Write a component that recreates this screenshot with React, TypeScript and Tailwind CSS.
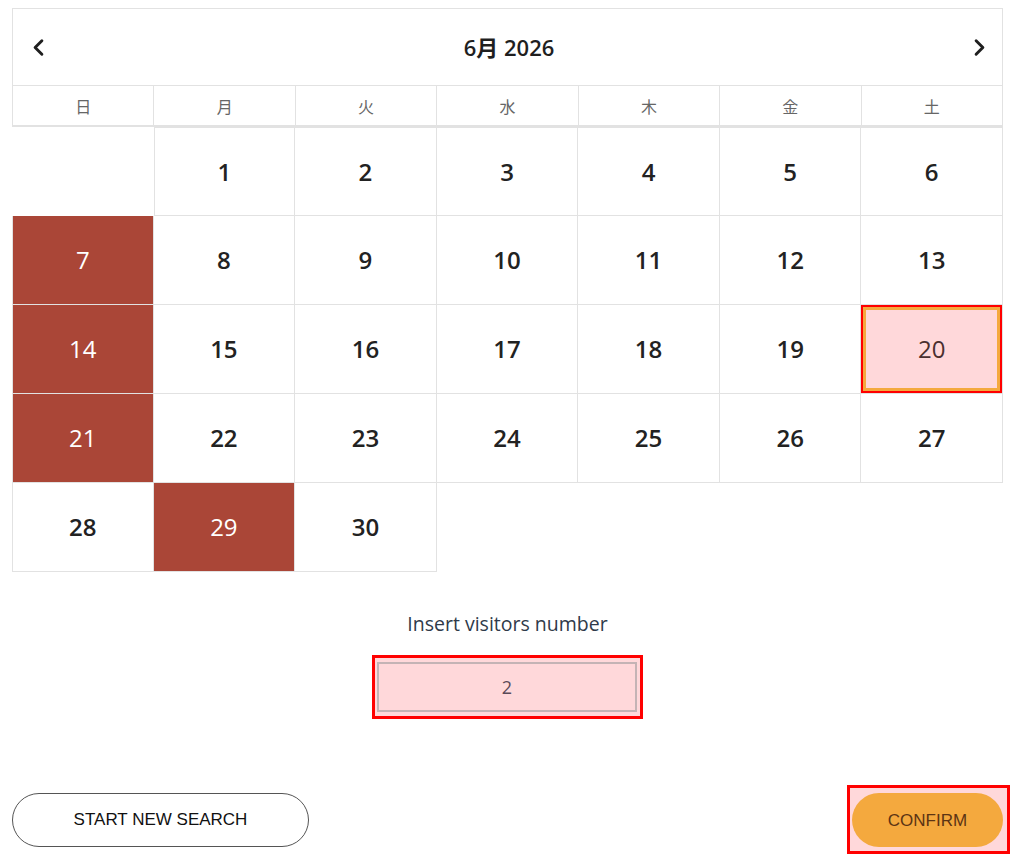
import { ChevronLeft, ChevronRight } from 'lucide-react';

const weekdays = ['日', '月', '火', '水', '木', '金', '土'];

// 0 = empty slot before the 1st
const days: number[] = [0, ...Array.from({ length: 30 }, (_, i) => i + 1)];

const closed = [7, 14, 21, 29];
const selected = 20;

const App = () => {
  return (
    <div
      className="min-h-[855px] bg-white pt-2 pl-3"
      style={{ fontFamily: '"Open Sans", "Noto Sans CJK JP", sans-serif' }}
    >
      <div className="w-[991px]">
        {/* Month header */}
        <div className="flex h-[78px] items-center justify-between border border-[#e2e2e2] pl-[12px] pr-[9px] text-[#1f1f1f]">
          <ChevronLeft size={27} strokeWidth={2.6} />
          <span className="text-[22px] font-semibold">6月 2026</span>
          <ChevronRight size={27} strokeWidth={2.6} />
        </div>

        {/* Weekday row */}
        <div className="grid h-[41px] grid-cols-7 border-b-2 border-l border-[#e2e2e2]">
          {weekdays.map((d) => (
            <div
              key={d}
              className="flex items-center justify-center border-r border-[#e2e2e2] text-[16px] text-[#666666]"
              style={{ fontFamily: '"Noto Sans CJK JP", sans-serif' }}
            >
              {d}
            </div>
          ))}
        </div>

        {/* Days */}
        <div className="grid grid-cols-7">
          {days.map((day, index) => {
            if (day === 0) return <div key={index} className="h-[89px]" />;
            const col = index % 7;
            const row = Math.floor(index / 7);
            const edges = [
              'border-r border-b border-[#e2e2e2]',
              col === 0 || day === 1 ? 'border-l' : '',
              row === 0 ? 'border-t' : '',
            ].join(' ');

            if (day === selected) {
              return (
                <div key={index} className={`h-[89px] ${edges}`}>
                  <div className="h-full border-2 border-[#ff0000]">
                    <div className="flex h-full items-center justify-center border-[3px] border-[#f4a93e] bg-[#ffd8da] text-[24px] text-[#4a2f2f]">
                      {day}
                    </div>
                  </div>
                </div>
              );
            }

            const isClosed = closed.includes(day);
            return (
              <div
                key={index}
                className={`flex h-[89px] items-center justify-center text-[24px] ${edges} ${
                  isClosed ? 'bg-[#aa4637] font-normal text-white' : 'font-semibold text-[#222222]'
                }`}
              >
                {day}
              </div>
            );
          })}
        </div>

        {/* Visitors */}
        <div className="mt-[37px] flex flex-col items-center">
          <p className="text-[19.5px] text-[#2f3a4a]">Insert visitors number</p>
          <div className="mt-[17px] border-[3px] border-[#ff0000] bg-[#ffd8da] py-[4px] pl-[2px] pr-[3px]">
            <input
              readOnly
              value="2"
              className="h-[50px] w-[260px] border-2 border-[#c4b3b5] bg-[#ffd8da] text-center text-[18px] text-[#5a4a58] outline-none"
            />
          </div>
        </div>
      </div>

      {/* Actions */}
      <div
        className="mt-[66px] flex w-[998px] items-center justify-between"
        style={{ fontFamily: '"Liberation Sans", Arial, sans-serif' }}
      >
        <button className="h-[54px] w-[297px] rounded-full border border-[#555555] bg-white text-[17px] text-[#111111]">
          START NEW SEARCH
        </button>
        <div className="border-[3px] border-[#ff0000] bg-[#ffd8da] pb-[4px] pl-[2px] pr-[4px] pt-[5px]">
          <button className="h-[54px] w-[151px] rounded-full bg-[#f4a93e] text-[17px] text-[#5c3414]">
            CONFIRM
          </button>
        </div>
      </div>
    </div>
  );
};

export default App;
